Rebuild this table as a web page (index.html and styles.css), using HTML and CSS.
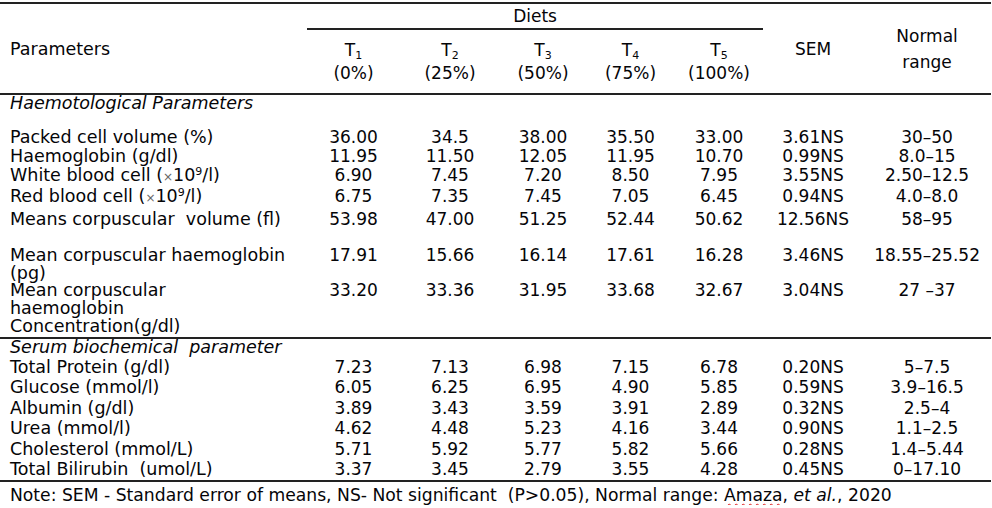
FILE: index.html
```html
<!DOCTYPE html>
<html lang="en">
<head>
<meta charset="utf-8">
<title>Haematological and serum biochemical parameters</title>
<link rel="stylesheet" href="styles.css">
</head>
<body>
<table class="tbl">
  <colgroup>
    <col class="c-param"><col class="c-t1"><col class="c-t2"><col class="c-t3"><col class="c-t4"><col class="c-t5"><col class="c-sem"><col class="c-norm">
  </colgroup>
  <thead>
    <tr>
      <th rowspan="2" class="param hb">Parameters</th>
      <th colspan="5" class="diets">Diets</th>
      <th rowspan="2" class="hb">SEM</th>
      <th rowspan="2" class="hb norm">Normal<br>range</th>
    </tr>
    <tr class="h2">
      <th>T<sub>1</sub><br>(0%)</th>
      <th>T<sub>2</sub><br>(25%)</th>
      <th>T<sub>3</sub><br>(50%)</th>
      <th>T<sub>4</sub><br>(75%)</th>
      <th>T<sub>5</sub><br>(100%)</th>
    </tr>
  </thead>
  <tbody class="g1">
    <tr class="sec first"><td colspan="8">Haemotological Parameters</td></tr>
    <tr><td class="p">Packed cell volume (%)</td><td>36.00</td><td>34.5</td><td>38.00</td><td>35.50</td><td>33.00</td><td>3.61NS</td><td>30–50</td></tr>
    <tr><td class="p">Haemoglobin (g/dl)</td><td>11.95</td><td>11.50</td><td>12.05</td><td>11.95</td><td>10.70</td><td>0.99NS</td><td>8.0–15</td></tr>
    <tr><td class="p">White blood cell (<span class="x">×</span>10<sup>9</sup>/l)</td><td>6.90</td><td>7.45</td><td>7.20</td><td>8.50</td><td>7.95</td><td>3.55NS</td><td>2.50–12.5</td></tr>
    <tr><td class="p">Red blood cell (<span class="x">×</span>10<sup>9</sup>/l)</td><td>6.75</td><td>7.35</td><td>7.45</td><td>7.05</td><td>6.45</td><td>0.94NS</td><td>4.0–8.0</td></tr>
    <tr class="mcv"><td class="p">Means corpuscular&nbsp; volume (fl)</td><td>53.98</td><td>47.00</td><td>51.25</td><td>52.44</td><td>50.62</td><td>12.56NS</td><td>58–95</td></tr>
    <tr class="ml"><td class="p">Mean corpuscular haemoglobin<br>(pg)</td><td>17.91</td><td>15.66</td><td>16.14</td><td>17.61</td><td>16.28</td><td>3.46NS</td><td>18.55–25.52</td></tr>
    <tr class="ml last"><td class="p">Mean corpuscular<br>haemoglobin<br>Concentration(g/dl)</td><td>33.20</td><td>33.36</td><td>31.95</td><td>33.68</td><td>32.67</td><td>3.04NS</td><td>27 –37</td></tr>
  </tbody>
  <tbody class="g2">
    <tr class="sec"><td colspan="8">Serum biochemical&nbsp; parameter</td></tr>
    <tr><td class="p">Total Protein (g/dl)</td><td>7.23</td><td>7.13</td><td>6.98</td><td>7.15</td><td>6.78</td><td>0.20NS</td><td>5–7.5</td></tr>
    <tr><td class="p">Glucose (mmol/l)</td><td>6.05</td><td>6.25</td><td>6.95</td><td>4.90</td><td>5.85</td><td>0.59NS</td><td>3.9–16.5</td></tr>
    <tr><td class="p">Albumin (g/dl)</td><td>3.89</td><td>3.43</td><td>3.59</td><td>3.91</td><td>2.89</td><td>0.32NS</td><td>2.5–4</td></tr>
    <tr><td class="p">Urea (mmol/l)</td><td>4.62</td><td>4.48</td><td>5.23</td><td>4.16</td><td>3.44</td><td>0.90NS</td><td>1.1–2.5</td></tr>
    <tr><td class="p">Cholesterol (mmol/L)</td><td>5.71</td><td>5.92</td><td>5.77</td><td>5.82</td><td>5.66</td><td>0.28NS</td><td>1.4–5.44</td></tr>
    <tr class="last"><td class="p">Total Bilirubin&nbsp; (umol/L)</td><td>3.37</td><td>3.45</td><td>2.79</td><td>3.55</td><td>4.28</td><td>0.45NS</td><td>0–17.10</td></tr>
  </tbody>
  <tfoot>
    <tr class="note"><td colspan="8">Note: SEM - Standard error of means, NS- Not significant&nbsp; (P&gt;0.05), Normal range: <span class="sp">Amaza</span>, <em>et al.</em>, 2020</td></tr>
  </tfoot>
</table>
</body>
</html>
```
FILE: styles.css
```css
html, body {
  margin: 0;
  background: #ffffff;
}
body {
  padding-top: 2px;
  font-family: "DejaVu Sans", "Liberation Sans", sans-serif;
  font-size: 17px;
  color: #050508;
}
.tbl {
  width: 991px;
  table-layout: fixed;
  border-collapse: separate;
  border-spacing: 0;
  border-top: 2px solid #222;
}
.c-param { width: 307px; }
.c-t1 { width: 93px; }
.c-t2 { width: 100px; }
.c-t3 { width: 86px; }
.c-t4 { width: 89px; }
.c-t5 { width: 88px; }
.c-sem { width: 100px; }
.c-norm { width: 128px; }

th, td {
  padding: 0;
  font-weight: normal;
  text-align: center;
  vertical-align: top;
  white-space: nowrap;
}
th.hb {
  vertical-align: middle;
  border-bottom: 2px solid #222;
}
th.param {
  text-align: left;
  padding-left: 10px;
  font-size: 17.5px;
}
th.norm {
  line-height: 26px;
}
th.diets {
  height: 23px;
  line-height: 24px;
  border-bottom: 2px solid #222;
}
.h2 th {
  line-height: 23px;
  padding: 9px 0 8px;
  border-bottom: 2px solid #222;
}
sub {
  font-size: 11px;
  line-height: 0;
  vertical-align: -3px;
}
sup {
  font-size: 11px;
  line-height: 0;
  vertical-align: 6px;
}
.x {
  font-size: 12px;
  color: #666;
}
td.p {
  text-align: left;
  padding-left: 10px;
  font-size: 17.5px;
}
.sec td {
  text-align: left;
  padding-left: 10px;
  font-style: italic;
  font-size: 17.5px;
}

/* Haematological group */
.g1 td { line-height: 19px; }
.g1 .sec td { line-height: 17px; padding-bottom: 16px; }
.g1 .mcv td { padding-top: 2px; padding-bottom: 18px; }
.g1 .ml td { line-height: 17.7px; }
.g1 .last td { padding-bottom: 1.5px; border-bottom: 2px solid #222; }

/* Serum group */
.g2 td { line-height: 20.5px; }
.g2 .sec td { line-height: 16px; padding-bottom: 1.5px; }
.g2 .last td { border-bottom: 2px solid #222; }

.note td {
  text-align: left;
  padding: 3px 0 0 10px;
  line-height: 20px;
  font-size: 17.2px;
}
.note em { font-style: italic; }
.sp {
  text-decoration-line: underline;
  text-decoration-style: wavy;
  text-decoration-color: #e02020;
  text-decoration-thickness: 1px;
  text-decoration-skip-ink: none;
  text-underline-offset: 2px;
}
```
